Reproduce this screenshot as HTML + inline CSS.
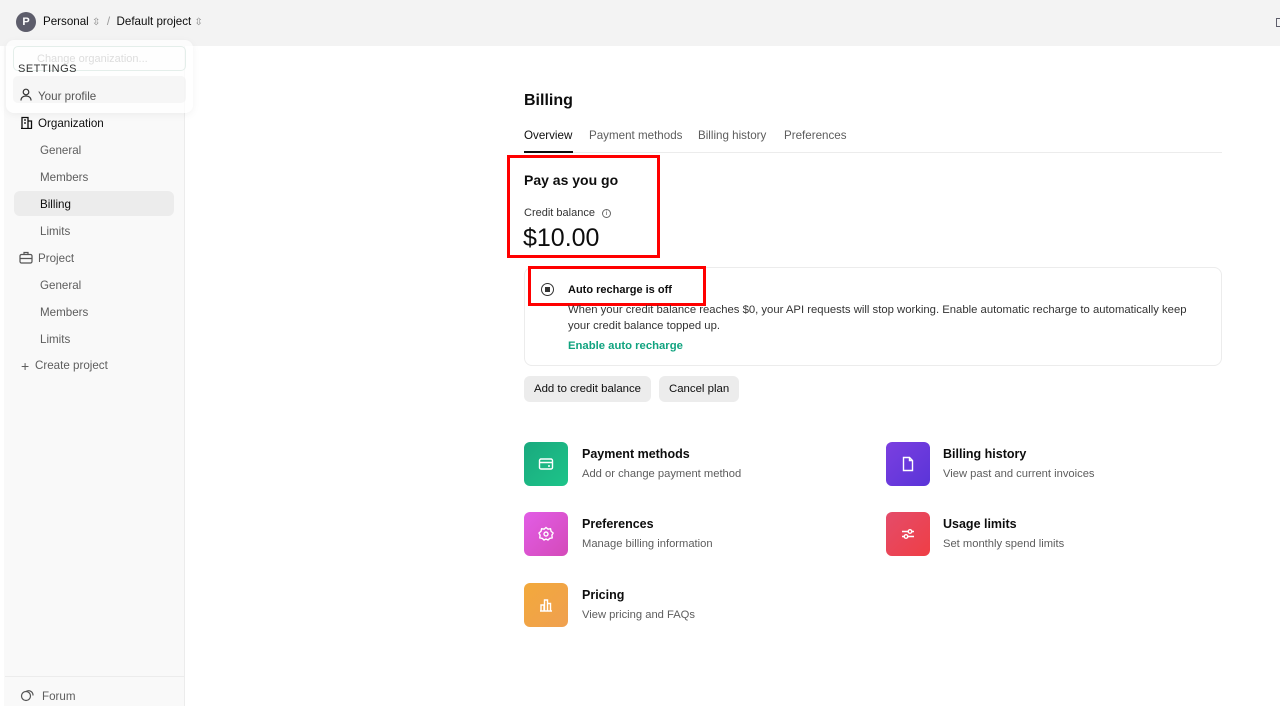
<!DOCTYPE html>
<html><head><meta charset="utf-8"><style>
*{box-sizing:border-box;margin:0;padding:0}
body{width:1280px;height:706px;overflow:hidden;background:#fff;font-family:"Liberation Sans",sans-serif;color:#0d0d0d;position:relative}
.top{position:absolute;left:0;top:0;width:1280px;height:46px;background:#f3f3f3}
.side{position:absolute;left:4px;top:46px;width:181px;height:660px;background:#f9f9f9;border-right:1px solid #ececec}
.a{position:absolute;font-size:11.6px;white-space:nowrap}
.g{color:#5d5d5d}
.red{position:absolute;border:3px solid #f00}
.ic{position:absolute;width:44px;height:44px;border-radius:6px;display:flex;align-items:center;justify-content:center}
.btn{position:absolute;height:26px;background:#ececec;border-radius:6px;font-size:11.4px;line-height:26px;padding:0 10px}
</style></head><body>
<div class="top"></div>
<div style="position:absolute;left:16px;top:12px;width:20px;height:20px;border-radius:50%;background:#5d5d6b;color:#fff;font-size:11px;font-weight:bold;text-align:center;line-height:20px">P</div>
<div class="a" style="left:43px;top:15px">Personal <span style="color:#888;font-size:10px">⇳</span> <span style="color:#999">&nbsp;/&nbsp;</span> Default project <span style="color:#888;font-size:10px">⇳</span></div>
<div style="position:absolute;left:1276px;top:18px;width:6px;height:9px;border:1.5px solid #5d5d6b"></div>
<div class="side"></div>
<div style="position:absolute;left:5px;top:676px;width:179px;border-top:1px solid #ececec"></div>
<div style="position:absolute;left:6px;top:40px;width:187px;height:73px;background:rgba(255,255,255,.75);border-radius:8px;box-shadow:0 2px 8px rgba(0,0,0,.05)"></div>
<div style="position:absolute;left:13px;top:46px;width:173px;height:25px;border:1px solid #e4eeea;border-radius:5px"></div>
<div class="a" style="left:37px;top:53px;color:#ddd;font-size:11px">Change organization...</div>
<div style="position:absolute;left:13px;top:76px;width:173px;height:27px;background:rgba(240,240,240,.6);border-radius:5px"></div>
<div class="a" style="left:18px;top:63px;font-size:11px;letter-spacing:.5px;color:#333">SETTINGS</div>
<svg style="position:absolute;left:20px;top:88px" width="12" height="13" viewBox="0 0 12 13" fill="none" stroke="#333" stroke-width="1.2"><circle cx="6" cy="4" r="2.8"/><path d="M1 12.5c0-3 2.3-4.5 5-4.5s5 1.5 5 4.5"/></svg>
<div class="a" style="left:38px;top:90px;color:#555">Your profile</div>
<svg style="position:absolute;left:20px;top:116px" width="13" height="13" viewBox="0 0 13 13" fill="none" stroke="#0d0d0d" stroke-width="1.3"><path d="M1 12.5h11M2 12.5V1.5h6v11M8 5h3.5v7.5M4 4h2M4 7h2"/></svg>
<div class="a" style="left:38px;top:117px">Organization</div>
<div class="a g" style="left:40px;top:144px">General</div>
<div class="a g" style="left:40px;top:171px">Members</div>
<div style="position:absolute;left:14px;top:191px;width:160px;height:25px;background:#ececec;border-radius:6px"></div>
<div class="a" style="left:40px;top:198px">Billing</div>
<div class="a g" style="left:40px;top:225px">Limits</div>
<svg style="position:absolute;left:19px;top:251px" width="14" height="13" viewBox="0 0 14 13" fill="none" stroke="#555" stroke-width="1.2"><rect x="1" y="3.5" width="12" height="8.5" rx="1.5"/><path d="M5 3.5V1.5h4v2M1 7.5h12"/></svg>
<div class="a g" style="left:38px;top:252px">Project</div>
<div class="a g" style="left:40px;top:279px">General</div>
<div class="a g" style="left:40px;top:306px">Members</div>
<div class="a g" style="left:40px;top:333px">Limits</div>
<div class="a g" style="left:21px;top:358px;font-size:14px">+</div>
<div class="a g" style="left:35px;top:359px">Create project</div>
<svg style="position:absolute;left:20px;top:689px" width="14" height="13" viewBox="0 0 14 13" fill="none" stroke="#555" stroke-width="1.2"><circle cx="6" cy="7" r="4.5"/><path d="M6 2.5a4.5 4.5 0 0 1 7 4"/></svg>
<div class="a g" style="left:42px;top:690px">Forum</div>

<div class="a" style="left:524px;top:92px;font-size:16px;font-weight:bold">Billing</div>
<div style="position:absolute;left:524px;top:152px;width:698px;border-top:1px solid #ececec"></div>
<div class="a" style="left:524px;top:129px">Overview</div>
<div style="position:absolute;left:524px;top:151px;width:49px;height:2px;background:#0d0d0d"></div>
<div class="a g" style="left:589px;top:129px">Payment methods</div>
<div class="a g" style="left:698px;top:129px">Billing history</div>
<div class="a g" style="left:784px;top:129px">Preferences</div>

<div class="red" style="left:507px;top:155px;width:153px;height:103px"></div>
<div class="a" style="left:524px;top:172px;font-size:14px;font-weight:bold">Pay as you go</div>
<div class="a" style="left:524px;top:207px;font-size:11px;color:#333">Credit balance <span style="display:inline-block;width:9px;height:9px;border:1px solid #666;border-radius:50%;margin-left:4px;font-size:6px;text-align:center;line-height:8px;vertical-align:1px">i</span></div>
<div class="a" style="left:523px;top:224px;font-size:25px">$10.00</div>

<div style="position:absolute;left:524px;top:267px;width:698px;height:99px;border:1px solid #ececec;border-radius:8px"></div>
<div class="red" style="left:528px;top:266px;width:178px;height:40px"></div>
<div style="position:absolute;left:541px;top:283px;width:13px;height:13px;border:1.3px solid #333;border-radius:50%"></div>
<div style="position:absolute;left:545px;top:287px;width:5px;height:5px;background:#333"></div>
<div class="a" style="left:568px;top:284px;font-size:11px;font-weight:bold">Auto recharge is off</div>
<div class="a" style="left:568px;top:304px;color:#333;font-size:11.3px">When your credit balance reaches $0, your API requests will stop working. Enable automatic recharge to automatically keep</div>
<div class="a" style="left:568px;top:320px;color:#333;font-size:11.3px">your credit balance topped up.</div>
<div class="a" style="left:568px;top:340px;color:#10a37f;font-weight:bold;font-size:11.3px">Enable auto recharge</div>
<div class="btn" style="left:524px;top:376px">Add to credit balance</div>
<div class="btn" style="left:659px;top:376px">Cancel plan</div>

<div class="ic" style="left:524px;top:442px;background:linear-gradient(135deg,#1aa97e,#1dc489)"><svg width="16" height="16" viewBox="0 0 16 16" fill="none" stroke="#fff" stroke-width="1.4"><rect x="1.5" y="3" width="13" height="10" rx="1.5"/><path d="M1.5 6.5h13M10 10h2"/></svg></div>
<div class="a" style="left:582px;top:447px;font-size:12.5px;font-weight:bold">Payment methods</div>
<div class="a g" style="left:582px;top:468px;font-size:11.2px">Add or change payment method</div>
<div class="ic" style="left:524px;top:512px;background:linear-gradient(135deg,#e25de6,#d44ab9)"><svg width="16" height="16" viewBox="0 0 16 16" fill="none" stroke="#fff" stroke-width="1.4"><path d="M8 1.5l2 1.6 2.5-.3.6 2.5 2 1.7-1.2 2.2.3 2.6-2.5.6L10 14l-2-1-2 1-1.7-1.6-2.5-.6.3-2.6L1 7l2-1.7.6-2.5 2.5.3z"/><circle cx="8" cy="8" r="2"/></svg></div>
<div class="a" style="left:582px;top:517px;font-size:12.5px;font-weight:bold">Preferences</div>
<div class="a g" style="left:582px;top:538px;font-size:11.2px">Manage billing information</div>
<div class="ic" style="left:524px;top:583px;background:linear-gradient(135deg,#f2a93b,#f0a050)"><svg width="16" height="16" viewBox="0 0 16 16" fill="none" stroke="#fff" stroke-width="1.4"><path d="M2 14h12M3 14V8h3v6M6.5 14V3h3v11M9.5 14V6.5h3V14"/></svg></div>
<div class="a" style="left:582px;top:588px;font-size:12.5px;font-weight:bold">Pricing</div>
<div class="a g" style="left:582px;top:609px;font-size:11.2px">View pricing and FAQs</div>

<div class="ic" style="left:886px;top:442px;background:linear-gradient(135deg,#7b3fe0,#5a34d8)"><svg width="16" height="16" viewBox="0 0 16 16" fill="none" stroke="#fff" stroke-width="1.4"><path d="M3.5 1.5h6l3 3v10h-9z M9.5 1.5v3h3"/></svg></div>
<div class="a" style="left:943px;top:447px;font-size:12.5px;font-weight:bold">Billing history</div>
<div class="a g" style="left:943px;top:468px;font-size:11.2px">View past and current invoices</div>
<div class="ic" style="left:886px;top:512px;background:linear-gradient(135deg,#e44c6a,#ef3e45)"><svg width="16" height="16" viewBox="0 0 16 16" fill="none" stroke="#fff" stroke-width="1.4"><path d="M2 5.5h12M2 10.5h12"/><circle cx="10" cy="5.5" r="1.8" fill="#ea4456"/><circle cx="6" cy="10.5" r="1.8" fill="#ea4456"/></svg></div>
<div class="a" style="left:943px;top:517px;font-size:12.5px;font-weight:bold">Usage limits</div>
<div class="a g" style="left:943px;top:538px;font-size:11.2px">Set monthly spend limits</div>
</body></html>
